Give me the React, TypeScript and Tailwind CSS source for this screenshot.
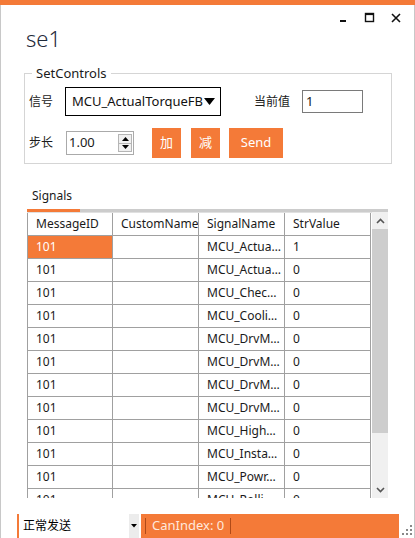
import React from 'react';

const rows: [string, string][] = [
    ['MCU_Actua…', '1'],
    ['MCU_Actua…', '0'],
    ['MCU_Chec…', '0'],
    ['MCU_Cooli…', '0'],
    ['MCU_DrvM…', '0'],
    ['MCU_DrvM…', '0'],
    ['MCU_DrvM…', '0'],
    ['MCU_DrvM…', '0'],
    ['MCU_High…', '0'],
    ['MCU_Insta…', '0'],
    ['MCU_Powr…', '0'],
    ['MCU_Rolli…', '0'],
];

const cell = 'h-[23px] px-[8px] flex items-center border-r border-b border-[#a0a0a0] whitespace-nowrap overflow-hidden';

const App: React.FC = () => {
    return (
        <div
            className="w-[415px] h-[538px] flex flex-col bg-white text-[#1a1a1a] overflow-hidden"
            style={{ fontFamily: '"Noto Sans", "Noto Sans CJK SC", sans-serif' }}
        >
            <div className="h-[5px] bg-[#f47a38] shrink-0" />
            <div className="flex-1 flex flex-col border-x border-[#c8c8c8] min-h-0">
                {/* Title bar */}
                <div className="h-[61px] flex justify-between shrink-0">
                    <h1 className="pl-[25px] pt-[18px] text-[22px] font-light leading-[30px] text-[#1f2a3a]">se1</h1>
                    <div className="flex items-start gap-[14px] pt-[7px] pr-[12px]">
                        <svg width="12" height="12" viewBox="0 0 12 12"><rect x="2" y="8" width="6" height="2" fill="#111" /></svg>
                        <svg width="12" height="12" viewBox="0 0 12 12"><rect x="1.5" y="1.5" width="8" height="8" fill="none" stroke="#111" strokeWidth="1.4" /><rect x="1.5" y="1.5" width="8" height="1.6" fill="#111" /></svg>
                        <svg width="12" height="12" viewBox="0 0 12 12"><path d="M2 2 L10 10 M10 2 L2 10" stroke="#111" strokeWidth="1.6" /></svg>
                    </div>
                </div>

                {/* SetControls */}
                <fieldset className="ml-[23px] w-[368px] h-[98px] border border-[#d5d5d5] px-[4px] pb-[8px] shrink-0">
                    <legend className="ml-[3px] px-[4px] text-[13px] leading-[14px]">SetControls</legend>
                    <div className="flex items-center mt-[7px] text-[12px]">
                        <span className="w-[36px]">信号</span>
                        <div className="w-[156px] h-[29px] border border-black flex items-center pl-[6px] pr-[5px] text-[13px] text-[#111]">
                            <span className="flex-1 whitespace-nowrap">MCU_ActualTorqueFB</span>
                            <svg className="shrink-0" width="11" height="8" viewBox="0 0 11 8"><path d="M0 0 H11 L5.5 7 Z" fill="#000" /></svg>
                        </div>
                        <span className="ml-[33px] w-[48px]">当前值</span>
                        <div className="w-[61px] h-[23px] border border-[#7a7a7a] flex items-center px-[3px] text-[13px]">1</div>
                    </div>
                    <div className="flex items-center mt-[12px] text-[12px]">
                        <span className="w-[37px]">步长</span>
                        <div className="w-[68px] h-[24px] border border-[#aaa] flex items-center justify-between pl-[2px] pr-[1px] text-[13px]">
                            <span>1.00</span>
                            <div className="flex flex-col w-[14px] h-[18px] border border-[#b5b5b5] bg-[#f0f0f0]">
                                <div className="flex-1 flex items-center justify-center border-b border-[#b5b5b5]">
                                    <svg width="7" height="4" viewBox="0 0 7 4"><path d="M0 4 L3.5 0 L7 4 Z" fill="#000" /></svg>
                                </div>
                                <div className="flex-1 flex items-center justify-center">
                                    <svg width="7" height="4" viewBox="0 0 7 4"><path d="M0 0 L3.5 4 L7 0 Z" fill="#000" /></svg>
                                </div>
                            </div>
                        </div>
                        <button className="ml-[18px] w-[29px] h-[30px] bg-[#f47a38] text-white text-[13px]">加</button>
                        <button className="ml-[10px] w-[29px] h-[30px] bg-[#f47a38] text-white text-[13px]">减</button>
                        <button className="ml-[9px] w-[54px] h-[30px] bg-[#f47a38] text-white text-[13px]">Send</button>
                    </div>
                </fieldset>

                {/* Signals tab */}
                <div className="mt-[24px] ml-[26px] w-[361px] shrink-0">
                    <div className="pl-[5px] text-[12px] leading-[16px] h-[21px]">Signals</div>
                    <div className="flex h-[3px]">
                        <div className="w-[53px] bg-[#f47a38]" />
                        <div className="flex-1 bg-[#cccccc]" />
                    </div>
                    <div className="flex h-[286px]">
                        <div className="w-[345px] overflow-hidden text-[12px]">
                            <div className="grid grid-cols-[86px_86px_86px_86px] border-t border-[#e0e0e0]">
                                <div className={`${cell} border-l`}>MessageID</div>
                                <div className={cell}>CustomName</div>
                                <div className={cell}>SignalName</div>
                                <div className={cell}>StrValue</div>
                                {rows.map(([name, value], i) => (
                                    <React.Fragment key={i}>
                                        <div className={`${cell} border-l ${i === 0 ? 'bg-[#f47a38] text-white' : ''}`}>101</div>
                                        <div className={cell} />
                                        <div className={cell}>{name}</div>
                                        <div className={cell}>{value}</div>
                                    </React.Fragment>
                                ))}
                            </div>
                        </div>
                        <div className="w-[16px] flex flex-col bg-[#f0f0f0]">
                            <div className="h-[17px] flex items-center justify-center">
                                <svg width="9" height="6" viewBox="0 0 9 6"><path d="M1 5 L4.5 1.5 L8 5" fill="none" stroke="#555" strokeWidth="1.6" /></svg>
                            </div>
                            <div className="h-[204px] bg-[#cdcdcd]" />
                            <div className="flex-1" />
                            <div className="h-[17px] flex items-center justify-center">
                                <svg width="9" height="6" viewBox="0 0 9 6"><path d="M1 1 L4.5 4.5 L8 1" fill="none" stroke="#555" strokeWidth="1.6" /></svg>
                            </div>
                        </div>
                    </div>
                </div>

                {/* Status bar */}
                <div className="mt-auto h-[24px] flex items-stretch text-[13px] shrink-0">
                    <div className="ml-[16px] w-[122px] flex border-l-2 border-[#f47a38] bg-white">
                        <span className="flex-1 pl-[4px] flex items-center text-[12px] text-black">正常发送</span>
                        <div className="w-[10px] bg-[#ececec] flex items-center justify-center">
                            <svg width="6" height="4" viewBox="0 0 6 4"><path d="M0 0 H6 L3 3.5 Z" fill="#000" /></svg>
                        </div>
                    </div>
                    <div className="ml-[2px] w-[258px] bg-[#f47a38] flex items-center">
                        <div className="ml-[4px] w-px h-[16px] bg-[#b04a18]" />
                        <span className="px-[6px] text-[#ffe8dc]">CanIndex: 0</span>
                        <div className="w-px h-[16px] bg-[#b04a18]" />
                    </div>
                    <div className="flex-1 flex items-end justify-end pr-[2px] pb-[3px]">
                        <svg width="10" height="10" viewBox="0 0 10 10" fill="#888">
                            <rect x="8" y="0" width="2" height="2" />
                            <rect x="4" y="4" width="2" height="2" />
                            <rect x="8" y="4" width="2" height="2" />
                            <rect x="0" y="8" width="2" height="2" />
                            <rect x="4" y="8" width="2" height="2" />
                            <rect x="8" y="8" width="2" height="2" />
                        </svg>
                    </div>
                </div>
            </div>
        </div>
    );
};

export default App;
